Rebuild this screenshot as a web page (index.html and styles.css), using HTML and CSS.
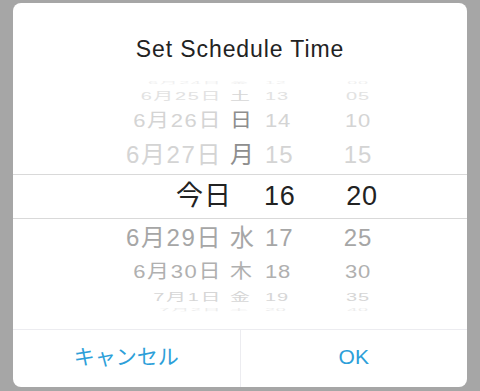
FILE: index.html
```html
<!DOCTYPE html>
<html>
  <head>
    <meta charset="utf-8">
    <meta name="viewport" content="width=device-width,initial-scale=1.0">
    <title>Set Schedule Time</title>
    <link rel="stylesheet" href="styles.css">
  </head>
  <body>
    <div class="dialog">
      <div class="title">Set Schedule Time</div>
      <div class="picker">
        <div class="row r4 top"><span class="date">6月24日</span><span class="wday">金</span><span class="hour">12</span><span class="min">00</span></div>
        <div class="row r3 top"><span class="date">6月25日</span><span class="wday">土</span><span class="hour">13</span><span class="min">05</span></div>
        <div class="row r2 top"><span class="date">6月26日</span><span class="wday">日</span><span class="hour">14</span><span class="min">10</span></div>
        <div class="row r1 top"><span class="date">6月27日</span><span class="wday">月</span><span class="hour">15</span><span class="min">15</span></div>
        <div class="row sel"><span class="today">今日</span><span class="hour">16</span><span class="min">20</span></div>
        <div class="row r1 bottom"><span class="date">6月29日</span><span class="wday">水</span><span class="hour">17</span><span class="min">25</span></div>
        <div class="row r2 bottom"><span class="date">6月30日</span><span class="wday">木</span><span class="hour">18</span><span class="min">30</span></div>
        <div class="row r3 bottom"><span class="date">7月1日</span><span class="wday">金</span><span class="hour">19</span><span class="min">35</span></div>
        <div class="row r4 bottom"><span class="date">7月2日</span><span class="wday">土</span><span class="hour">20</span><span class="min">40</span></div>
      </div>
      <div class="buttons">
        <div class="btn cancel">キャンセル</div>
        <div class="btn ok">OK</div>
      </div>
    </div>
  </body>
</html>
```

FILE: styles.css
```css
* {
  margin: 0;
  padding: 0;
  box-sizing: border-box;
}

html, body {
  width: 480px;
  height: 391px;
  overflow: hidden;
}

body {
  background-color: #a6a6a6;
  font-family: "Liberation Sans", "Noto Sans CJK JP", sans-serif;
  padding: 3px 13px 0;
}

.dialog {
  width: 454px;
  height: 384px;
  background-color: #fff;
  border-radius: 8px;
  display: flex;
  flex-direction: column;
}

.title {
  height: 77px;
  padding-top: 33px;
  line-height: 26px;
  font-size: 23px;
  letter-spacing: 0.9px;
  color: #222;
  text-align: center;
}

.picker {
  height: 246px;
  overflow: hidden;
}

.row {
  display: flex;
  white-space: nowrap;
  color: #d2d2d2;
}

.date {
  width: 209px;
  letter-spacing: 1.6px;
  text-align: right;
}

.wday {
  width: 25px;
  margin-left: 8px;
}

.hour {
  width: 50px;
  margin-left: 10px;
  letter-spacing: 0.8px;
}

.min {
  width: 86px;
  text-align: center;
  letter-spacing: 0.8px;
}

.r4 {
  height: 6px;
  line-height: 6px;
  font-size: 18px;
  color: #f0f0f0;
  transform: scaleY(0.2);
}

.r3 {
  height: 20px;
  line-height: 20px;
  font-size: 20px;
  color: #e2e2e2;
  transform: scaleY(0.58);
}

.r2 {
  height: 30px;
  line-height: 30px;
  font-size: 22px;
  transform: scaleY(0.86);
}

.r1 {
  height: 38px;
  line-height: 38px;
  font-size: 24px;
}

.top.r2, .top.r1 {
  color: #d4d4d4;
}

.top.r2 .wday, .top.r1 .wday {
  color: #8e8e8e;
}

.top.r3 .wday {
  color: #d6d6d6;
}

.bottom.r1 {
  color: #a6a6a6;
}

.bottom.r2 {
  color: #b0b0b0;
}

.bottom.r3 {
  color: #d6d6d6;
}

.bottom.r4 {
  color: #ececec;
}

.sel {
  height: 45px;
  line-height: 43px;
  font-size: 27px;
  color: #222;
  border-top: 1px solid #d9d9d9;
  border-bottom: 1px solid #d9d9d9;
}

.sel .today {
  width: 219px;
  text-align: right;
  letter-spacing: 1px;
}

.sel .hour {
  margin-left: 32px;
}

.sel .min {
  width: 96px;
}

.buttons {
  flex: 1;
  display: flex;
  margin-top: 3px;
  border-top: 1px solid #ececf0;
}

.btn {
  flex: 1;
  text-align: center;
  line-height: 54px;
  font-size: 21px;
  color: #2d9fd9;
}

.cancel {
  border-right: 1px solid #ececf0;
}
```
